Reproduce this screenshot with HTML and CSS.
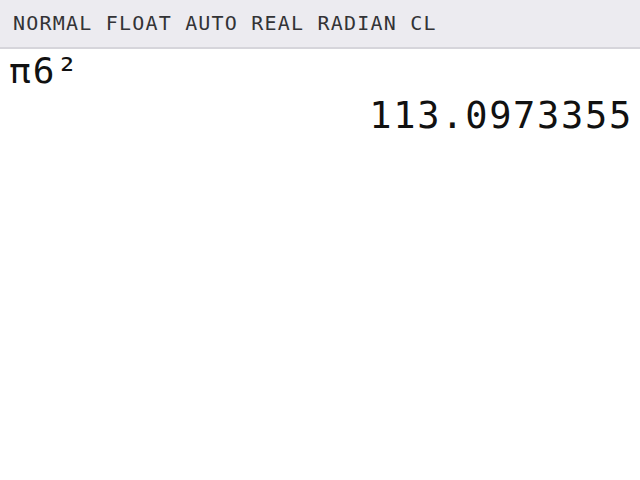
FILE: index.html
```html
<!DOCTYPE html>
<html>
<head>
<meta charset="utf-8">
<link rel="stylesheet" href="styles.css">
</head>
<body>
<div class="status">NORMAL FLOAT AUTO REAL RADIAN CL</div>
<div class="screen">
  <div class="expr">π6²</div>
  <div class="result">113.0973355</div>
</div>
</body>
</html>
```
FILE: styles.css
```css
html, body {
  margin: 0;
  padding: 0;
  background: #ffffff;
  width: 640px;
  height: 480px;
  overflow: hidden;
}
.status {
  box-sizing: border-box;
  height: 49px;
  background: #ecebf0;
  border-bottom: 2px solid #d6d5db;
  color: #333336;
  font-family: "DejaVu Sans Mono", monospace;
  font-size: 20px;
  letter-spacing: 1.2px;
  padding: 11px 0 0 13px;
  line-height: 24px;
}
.screen {
  font-family: "DejaVu Sans Mono", monospace;
  color: #111111;
}
.expr {
  font-size: 36px;
  letter-spacing: 2px;
  padding-left: 9px;
  line-height: 44px;
}
.result {
  font-size: 37px;
  letter-spacing: 1.7px;
  text-align: right;
  padding-right: 7px;
  line-height: 46px;
}
```
